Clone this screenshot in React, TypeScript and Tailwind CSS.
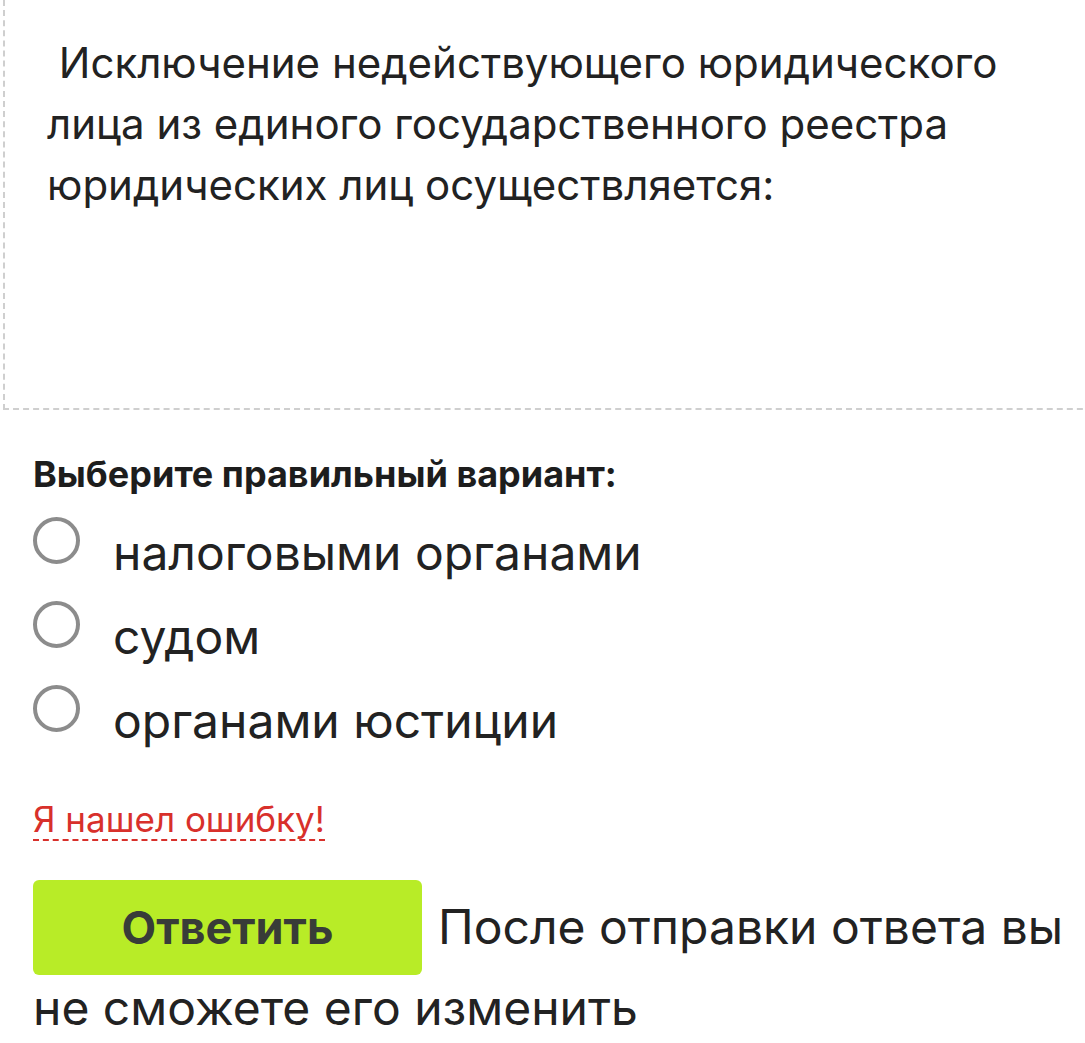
const options = ['налоговыми органами', 'судом', 'органами юстиции'];

function Radio() {
  return <span className="inline-block w-[47px] h-[47px] shrink-0 rounded-full border-[4px] border-[#8c8c8c] bg-white" />;
}

export default function App() {
  return (
    <div className="min-h-[1043px] w-[1085px] overflow-hidden bg-white text-[#222] font-['Inter',sans-serif]">
      <div className="ml-[3px] w-[1120px] h-[410px] border-l-2 border-b-2 border-dashed border-[#cfcfcf] pt-[32px] pl-[42px] pr-[60px]">
        <p className="text-[42px] leading-[61px] w-[1000px]">
          {'\u00a0'}Исключение недействующего юридического лица из единого государственного реестра юридических лиц осуществляется:
        </p>
      </div>

      <div className="pl-[33px] pt-[40px]">
        <h3 className="text-[36px] leading-[48px] font-bold text-[#1d1d1d]">Выберите правильный вариант:</h3>

        <ul className="mt-[19px] flex flex-col gap-[24px]">
          {options.map((o) => (
            <li key={o} className="flex items-start gap-[33px]">
              <Radio />
              <span className="text-[48px] leading-[48px] pt-[12px]">{o}</span>
            </li>
          ))}
        </ul>

        <a className="mt-[54px] block w-fit text-[35px] leading-[40px] text-[#d8302b] border-b-2 border-dashed border-[#d8302b]">
          Я нашел ошибку!
        </a>

        <div className="mt-[39px] text-[48px] leading-[66px]">
          <button className="inline-block w-[389px] h-[95px] rounded-[6px] bg-[#b8ec27] text-[45px] font-bold text-[#383c38] mr-[16px]">
            Ответить
          </button>
          После отправки ответа вы не сможете его изменить
        </div>
      </div>
    </div>
  );
}
